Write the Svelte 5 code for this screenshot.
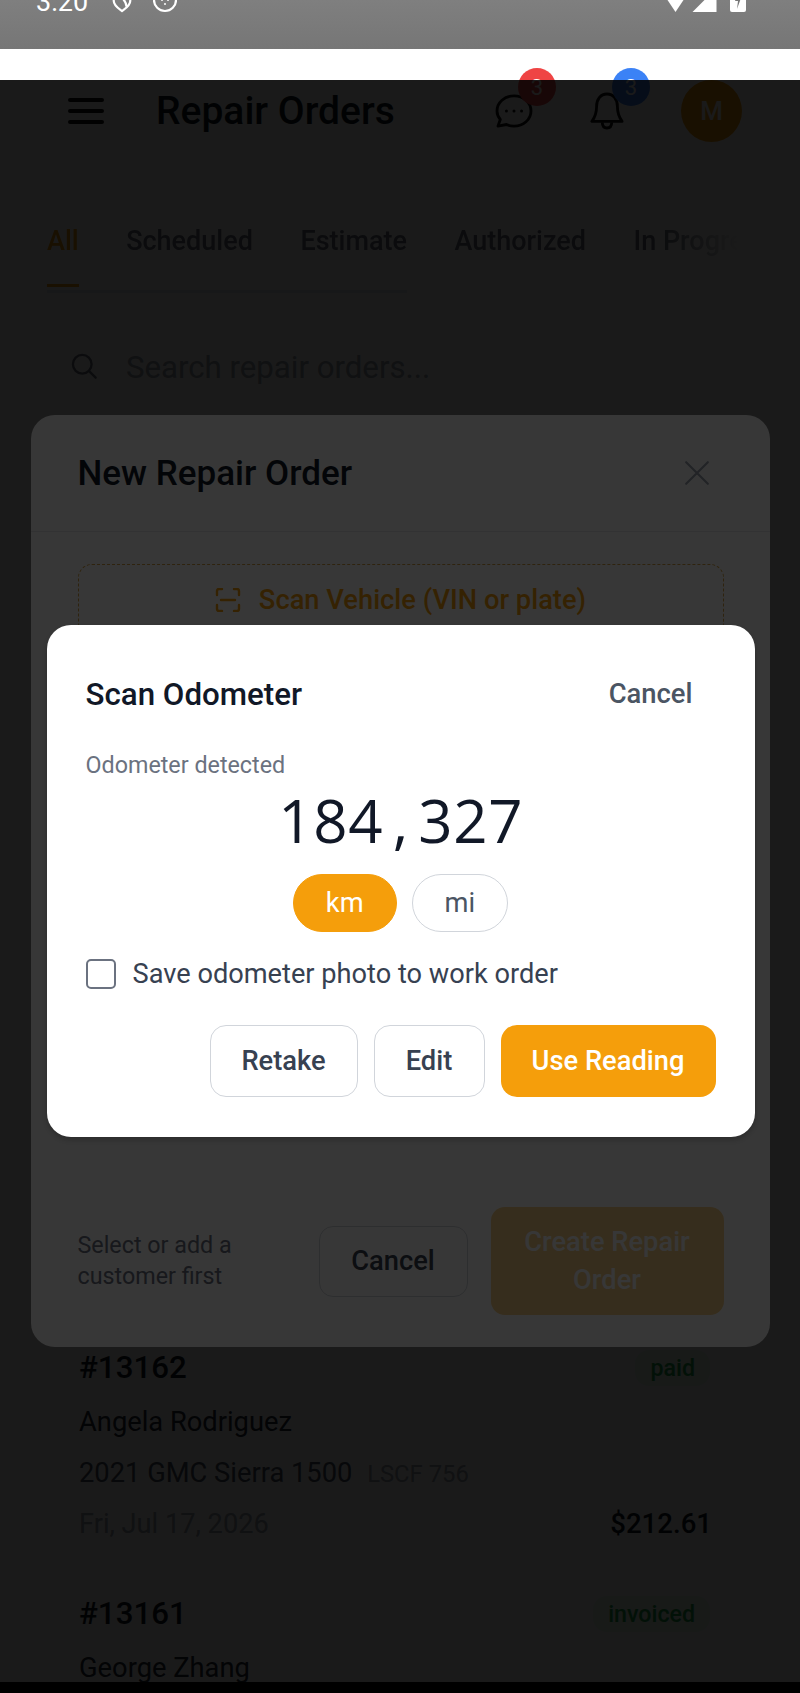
<script>
  // rows below the modal, only these two are visible in the screenshot
  const orders = [
    { id: '#13162', status: 'paid', name: 'Angela Rodriguez', car: '2021 GMC Sierra 1500', plate: 'LSCF 756', date: 'Fri, Jul 17, 2026', total: '$212.61' },
    { id: '#13161', status: 'invoiced', name: 'George Zhang', car: '', plate: '', date: '', total: '' }
  ];
  const tabs = ['All', 'Scheduled', 'Estimate', 'Authorized', 'In Progress'];
  const reading = '184,327'.split('');
</script>

<div class="phone">
  <div class="statusbar">
    <span class="clock">3:20</span>
    <svg class="st-shield" viewBox="0 0 24 24" fill="none" stroke="#fff" stroke-width="2.4" stroke-linejoin="round">
      <path d="M3 2v9c0 5 5 8 9 11 4-3 9-6 9-11V2" />
      <path d="M5 5c6 0 11 5 12 12" />
    </svg>
    <svg class="st-icon" viewBox="0 0 24 24" fill="none" stroke="#fff" stroke-width="2.2">
      <circle cx="12" cy="10" r="11" />
      <circle cx="9" cy="10" r="1" fill="#fff" stroke="none" />
      <circle cx="15" cy="10" r="1" fill="#fff" stroke="none" />
      <circle cx="12" cy="14" r="1" fill="#fff" stroke="none" />
    </svg>
    <span class="st-space"></span>
    <svg class="st-wifi" viewBox="0 0 24 18"><path d="M0 0h24L12 18z" fill="#fff" /></svg>
    <svg class="st-signal" viewBox="0 0 24 24"><path d="M24 0v24H0z" fill="#fff" /></svg>
    <svg class="st-batt" viewBox="0 0 16 24"><path d="M0 0h16v22q0 2-2 2H2q-2 0-2-2z" fill="#fff" /><path d="M9 2 5 13h3l-1 8 4-11H8z" fill="#777" /></svg>
  </div>

  <main class="page">
    <header class="topbar">
      <div class="burger"><i></i><i></i><i></i></div>
      <h1>Repair Orders</h1>
      <span class="grow"></span>
      <div class="icon-btn chat">
        <svg viewBox="0 0 40 36" width="38" height="34" fill="none" stroke="#111" stroke-width="3" stroke-linejoin="round">
          <path d="M20 2c10 0 18 7 18 16s-8 16-18 16c-3 0-6-.6-8-1.700L3 34l2.500-7C3.300 24.500 2 21.400 2 18 2 9 10 2 20 2z" />
          <circle cx="12" cy="18" r="1.600" fill="#111" stroke="none" />
          <circle cx="20" cy="18" r="1.600" fill="#111" stroke="none" />
          <circle cx="28" cy="18" r="1.600" fill="#111" stroke="none" />
        </svg>
        <span class="badge red">3</span>
      </div>
      <div class="icon-btn bell">
        <svg viewBox="0 0 36 40" width="34" height="38" fill="none" stroke="#111" stroke-width="3" stroke-linejoin="round">
          <path d="M18 2c-7 0-11 6-11 13 0 8-2 12-5 16h32c-3-4-5-8-5-16 0-7-4-13-11-13z" />
          <path d="M13 32c0 4 2 6 5 6s5-2 5-6" />
        </svg>
        <span class="badge blue">3</span>
      </div>
      <div class="avatar">M</div>
    </header>

    <nav class="tabs">
      {#each tabs as tab, i}
        <span class="tab" class:active={i === 0}>{tab}</span>
      {/each}
    </nav>
    <div class="tabs-track"></div>

    <div class="search">
      <svg viewBox="0 0 24 24" width="28" height="28" fill="none" stroke="#6b7280" stroke-width="2" stroke-linecap="round">
        <circle cx="10.500" cy="10.500" r="8" />
        <path d="m17 17 5 5" />
      </svg>
      <span>Search repair orders...</span>
    </div>

    <section class="orders">
      {#each orders as o}
        <article class="order">
          <div class="row">
            <b class="num">{o.id}</b>
            <span class="pill">{o.status}</span>
          </div>
          <div class="name">{o.name}</div>
          {#if o.car}
            <div class="car">{o.car} <small>{o.plate}</small></div>
            <div class="row">
              <span class="date">{o.date}</span>
              <b class="total">{o.total}</b>
            </div>
          {/if}
        </article>
      {/each}
    </section>

    <div class="overlay first">
      <div class="sheet">
        <div class="sheet-head">
          <h2>New Repair Order</h2>
          <svg viewBox="0 0 24 24" width="26" height="26" fill="none" stroke="#9ca3af" stroke-width="2" stroke-linecap="round">
            <path d="M2 2l20 20M22 2 2 22" />
          </svg>
        </div>
        <div class="sheet-body">
          <div class="scan-btn">
            <svg viewBox="0 0 26 24" width="26" height="24" fill="none" stroke="#f59e0b" stroke-width="2.400" stroke-linecap="round">
              <path d="M2 7V3q0-2 2-2h3M19 1h3q2 0 2 2v4M24 17v4q0 2-2 2h-3M7 23H4q-2 0-2-2v-4M6 12h14" />
            </svg>
            <span>Scan Vehicle (VIN or plate)</span>
          </div>
        </div>
        <div class="sheet-foot">
          <p>Select or add a customer first</p>
          <button class="foot-cancel">Cancel</button>
          <button class="create">Create Repair Order</button>
        </div>
      </div>
    </div>

    <div class="overlay second">
      <div class="dialog">
        <div class="dialog-head">
          <h3>Scan Odometer</h3>
          <span class="dialog-cancel">Cancel</span>
        </div>
        <div class="detected">Odometer detected</div>
        <div class="reading">
          {#each reading as ch}<span>{ch}</span>{/each}
        </div>
        <div class="units">
          <span class="unit on">km</span>
          <span class="unit">mi</span>
        </div>
        <label class="save">
          <span class="box"></span>
          Save odometer photo to work order
        </label>
        <div class="actions">
          <button class="ghost retake">Retake</button>
          <button class="ghost edit">Edit</button>
          <button class="use">Use Reading</button>
        </div>
      </div>
    </div>
  </main>

  <div class="navbar"></div>
</div>

<style>
  :global(body) {
    margin: 0;
    background: #000;
    font-family: Roboto, "Noto Sans", sans-serif;
  }

  .phone {
    width: 800px;
    height: 1693px;
    display: flex;
    flex-direction: column;
    overflow: hidden;
  }

  .statusbar {
    height: 49px;
    flex: none;
    box-sizing: border-box;
    padding: 0 54px 37px 36px;
    display: flex;
    align-items: flex-end;
    gap: 20px;
    background: linear-gradient(#7f7f7f, #767676);
    overflow: hidden;
  }
  .clock {
    color: #fff;
    font-size: 27px;
    line-height: 19px;
    margin-right: 3px;
  }
  .st-shield { width: 22px; height: 24px; flex: none; margin-bottom: -2px; }
  .st-icon { width: 24px; height: 24px; flex: none; margin-bottom: -2px; }
  .st-space { flex: 1; }
  .st-wifi { width: 31px; height: 18px; flex: none; margin-right: -19px; }
  .st-signal { width: 25px; height: 24px; flex: none; margin-right: -7px; }
  .st-batt { width: 16px; height: 24px; flex: none; }

  .page {
    flex: 1;
    position: relative;
    background: #fff;
    overflow: hidden;
  }

  .topbar {
    display: flex;
    align-items: center;
    height: 62px;
    margin-top: 31px;
    padding: 0 58px 0 68px;
  }
  .burger {
    width: 36px;
    display: flex;
    flex-direction: column;
    gap: 7px;
    margin-right: 52px;
  }
  .burger i { height: 4px; background: #111; border-radius: 2px; }
  .topbar h1 {
    margin: 0;
    font-size: 39px;
    font-weight: 500;
    color: #111827;
  }
  .grow { flex: 1; }
  .icon-btn { position: relative; display: flex; }
  .chat { margin-right: 57px; }
  .bell { margin-right: 57px; }
  .badge {
    position: absolute;
    width: 38px;
    height: 38px;
    border-radius: 50%;
    color: #fff;
    font-size: 22px;
    display: flex;
    align-items: center;
    justify-content: center;
  }
  .chat .badge { left: 23px; top: -26px; }
  .bell .badge { left: 22px; top: -24px; }
  .red { background: #ef4444; }
  .blue { background: #3b82f6; }
  .avatar {
    width: 61px;
    height: 62px;
    border-radius: 50%;
    background: #f59e0b;
    color: #fff;
    font-size: 26px;
    font-weight: 500;
    display: flex;
    align-items: center;
    justify-content: center;
  }

  .tabs {
    display: flex;
    gap: 47.5px;
    margin: 67px 59px 0 47px;
    overflow: hidden;
    white-space: nowrap;
    height: 78px;
    -webkit-mask-image: linear-gradient(to right, #000 88%, transparent);
    mask-image: linear-gradient(to right, #000 88%, transparent);
  }
  .tab {
    font-size: 27px;
    font-weight: 500;
    color: #6b7280;
    height: 78px;
    box-sizing: border-box;
    line-height: 64px;
    flex: none;
  }
  .tab.active {
    color: #f59e0b;
    border-bottom: 3px solid #f59e0b;
  }
  .tabs-track {
    width: 360px;
    height: 3px;
    margin: 3px 0 0 47px;
    background: #e2e8f0;
  }

  .search {
    display: flex;
    align-items: center;
    gap: 28px;
    margin: 56px 0 0 72px;
    font-size: 31.2px;
    color: #9ca3af;
  }
  .search svg { margin: -4px 0 0 -2px; }

  .orders {
    margin-top: 964px;
    padding: 0 88px 0 79px;
    color: #111827;
  }
  .order { height: 246px; }
  .row {
    display: flex;
    justify-content: space-between;
    align-items: center;
  }
  .num { font-size: 31.3px; font-weight: 500; line-height: 36px; }
  .pill {
    font-size: 23.2px;
    font-weight: 500;
    line-height: 36px;
    padding: 0 15px;
    margin-right: 2px;
    border-radius: 14px;
    background: #e6f8ef;
    color: #16a34a;
  }
  .name { font-size: 27.3px; line-height: 36px; margin-top: 18px; color: #1f2937; }
  .car { font-size: 27.3px; line-height: 36px; margin-top: 15px; color: #4b5563; }
  .car small { font-size: 23.8px; margin-left: 8px; color: #9ca3af; }
  .date { font-size: 27.2px; color: #9ca3af; line-height: 36px; margin-top: 14px; }
  .total { font-size: 27.6px; font-weight: 500; margin-top: 12px; }

  .overlay {
    position: absolute;
    inset: 31px 0 0 0;
    display: flex;
    align-items: center;
    justify-content: center;
  }
  .first { background: rgba(0, 0, 0, 0.52); }
  .second { background: rgba(0, 0, 0, 0.785); padding-left: 1px; }

  .sheet {
    width: 739px;
    height: 932px;
    background: #fff;
    border-radius: 24px;
    display: flex;
    flex-direction: column;
  }
  .sheet-head {
    height: 117px;
    flex: none;
    box-sizing: border-box;
    border-bottom: 1px solid #e5e7eb;
    padding: 0 60px 0 47px;
    display: flex;
    align-items: center;
    justify-content: space-between;
  }
  .sheet-head h2 {
    margin: 0;
    font-size: 35px;
    font-weight: 500;
    color: #111827;
  }
  .sheet-body { flex: 1; padding: 32px 46px 0 47px; }
  .scan-btn {
    height: 72px;
    box-sizing: border-box;
    border: 1px dashed #d9a441;
    border-radius: 14px;
    display: flex;
    align-items: center;
    justify-content: center;
    gap: 18px;
    color: #f59e0b;
    font-size: 27.3px;
    font-weight: 500;
  }
  .sheet-foot {
    display: flex;
    align-items: center;
    padding: 0 46px 32px 47px;
  }
  .sheet-foot p {
    flex: 1;
    margin: 0;
    font-size: 23.3px;
    line-height: 31px;
    color: #6b7280;
  }
  .foot-cancel {
    width: 149px;
    height: 71px;
    border: 1px solid #d1d5db;
    border-radius: 14px;
    background: #fff;
    font: 500 27.3px Roboto, sans-serif;
    color: #374151;
    margin-right: 23px;
    flex: none;
  }
  .create {
    width: 233px;
    height: 108px;
    flex: none;
    border: none;
    border-radius: 14px;
    background: #fad085;
    color: #fff;
    font: 500 27.3px/38px Roboto, sans-serif;
    padding: 0 24px;
  }

  .dialog {
    width: 708px;
    height: 512px;
    box-sizing: border-box;
    background: #fff;
    border-radius: 24px;
    padding: 0 39px 0 39px;
    box-shadow: 0 3px 5px rgba(0, 0, 0, 0.2);
  }
  .dialog-head {
    display: flex;
    align-items: center;
    justify-content: space-between;
    height: 40px;
    padding: 49px 23px 0 0;
  }
  .dialog-head h3 {
    margin: 0;
    font-size: 31.3px;
    font-weight: 500;
    color: #111827;
  }
  .dialog-cancel {
    font-size: 27.4px;
    font-weight: 500;
    color: #4b5563;
  }
  .detected {
    margin-top: 37px;
    font-size: 23.3px;
    line-height: 28px;
    color: #6b7280;
  }
  .reading {
    display: flex;
    justify-content: center;
    margin-top: 5px;
    color: #111827;
    font-family: "Open Sans", "Noto Sans", sans-serif;
    font-size: 60px;
    line-height: 72px;
  }
  .reading span { width: 35px; text-align: center; }
  .units {
    display: flex;
    justify-content: center;
    gap: 15px;
    margin-top: 18px;
  }
  .unit {
    height: 58px;
    box-sizing: border-box;
    padding: 0 32px;
    border: 1px solid #d1d5db;
    border-radius: 29px;
    font-size: 27.3px;
    line-height: 56px;
    color: #4b5563;
  }
  .unit.on {
    background: #f59e0b;
    border-color: #f59e0b;
    color: #fff;
  }
  .save {
    display: flex;
    align-items: center;
    gap: 17px;
    margin-top: 26px;
    font-size: 27.2px;
    color: #374151;
  }
  .box {
    width: 30px;
    height: 30px;
    box-sizing: border-box;
    border: 2px solid #6b7280;
    border-radius: 5px;
    flex: none;
  }
  .actions {
    display: flex;
    justify-content: flex-end;
    gap: 16px;
    margin-top: 35px;
  }
  .actions button {
    height: 72px;
    border-radius: 16px;
    font: 500 27.3px Roboto, sans-serif;
  }
  .ghost {
    background: #fff;
    border: 1px solid #d1d5db;
    color: #374151;
  }
  .retake { width: 148px; }
  .edit { width: 111px; }
  .use {
    width: 215px;
    border: none;
    background: #f59e0b;
    color: #fff;
  }

  .navbar {
    height: 11px;
    flex: none;
    background: #000;
  }
</style>
